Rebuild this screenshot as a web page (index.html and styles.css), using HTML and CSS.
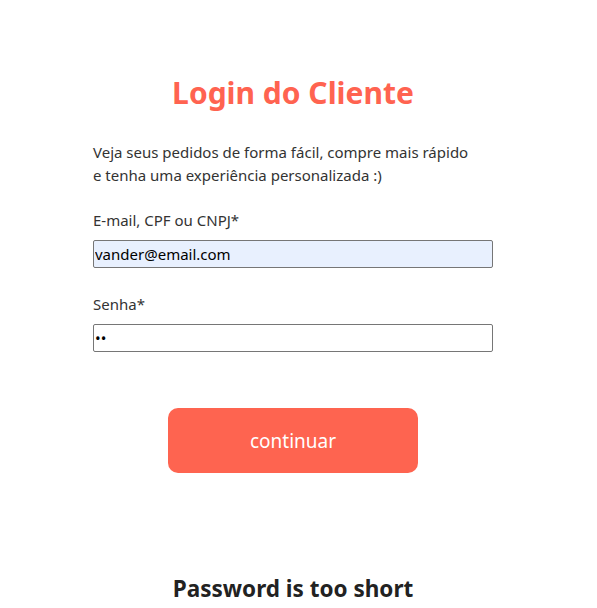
FILE: index.html
```html
<!DOCTYPE html>
<html lang="pt-BR">
<head>
<meta charset="utf-8">
<title>Login do Cliente</title>
<link rel="stylesheet" href="styles.css">
</head>
<body>
<main class="page">
  <form class="login">
    <h1 class="title">Login do Cliente</h1>
    <p class="intro">Veja seus pedidos de forma fácil, compre mais rápido e tenha uma experiência personalizada :)</p>
    <label class="field">
      <span class="label">E-mail, CPF ou CNPJ*</span>
      <input class="input input-filled" type="text" value="vander@email.com">
    </label>
    <label class="field">
      <span class="label">Senha*</span>
      <input class="input" type="password" value="12">
    </label>
    <div class="actions">
      <button class="btn" type="button">continuar</button>
    </div>
  </form>
  <h2 class="error">Password is too short</h2>
</main>
</body>
</html>
```
FILE: styles.css
```css
html, body {
  margin: 0;
  padding: 0;
  background: #fff;
}
body {
  font-family: "Noto Sans", "Open Sans", sans-serif;
  color: #222;
  padding-right: 11px;
}
.page {
  width: 400px;
  margin: 0 auto;
  padding-top: 71px;
}
.login {
  display: flex;
  flex-direction: column;
}
.title {
  margin: 0 0 26px;
  text-align: center;
  color: #ff6350;
  font-size: 30px;
  font-weight: 700;
  line-height: 44px;
}
.intro {
  margin: 0 0 21px;
  max-width: 385px;
  font-size: 15px;
  line-height: 23px;
  color: #333;
}
.field {
  display: flex;
  flex-direction: column;
  margin-bottom: 24px;
}
.label {
  font-size: 15px;
  line-height: 24px;
  color: #333;
  margin-bottom: 8px;
}
.input {
  box-sizing: border-box;
  height: 28px;
  width: 400px;
  margin: 0;
  padding: 0 1px;
  border: 1px solid #767676;
  border-radius: 2px;
  font-family: "Noto Sans", sans-serif;
  font-size: 15px;
  color: #000;
  background: #fff;
}
.input-filled {
  background: #e8f0fe;
}
.actions {
  display: flex;
  justify-content: center;
  margin-top: 32px;
}
.btn {
  width: 250px;
  height: 65px;
  border: 0;
  border-radius: 10px;
  background: #fe6450;
  color: #fff;
  font-family: "Noto Sans", sans-serif;
  font-size: 19px;
}
.error {
  margin: 100px 0 0;
  text-align: center;
  font-size: 22.5px;
  font-weight: 700;
  color: #222;
}
```
